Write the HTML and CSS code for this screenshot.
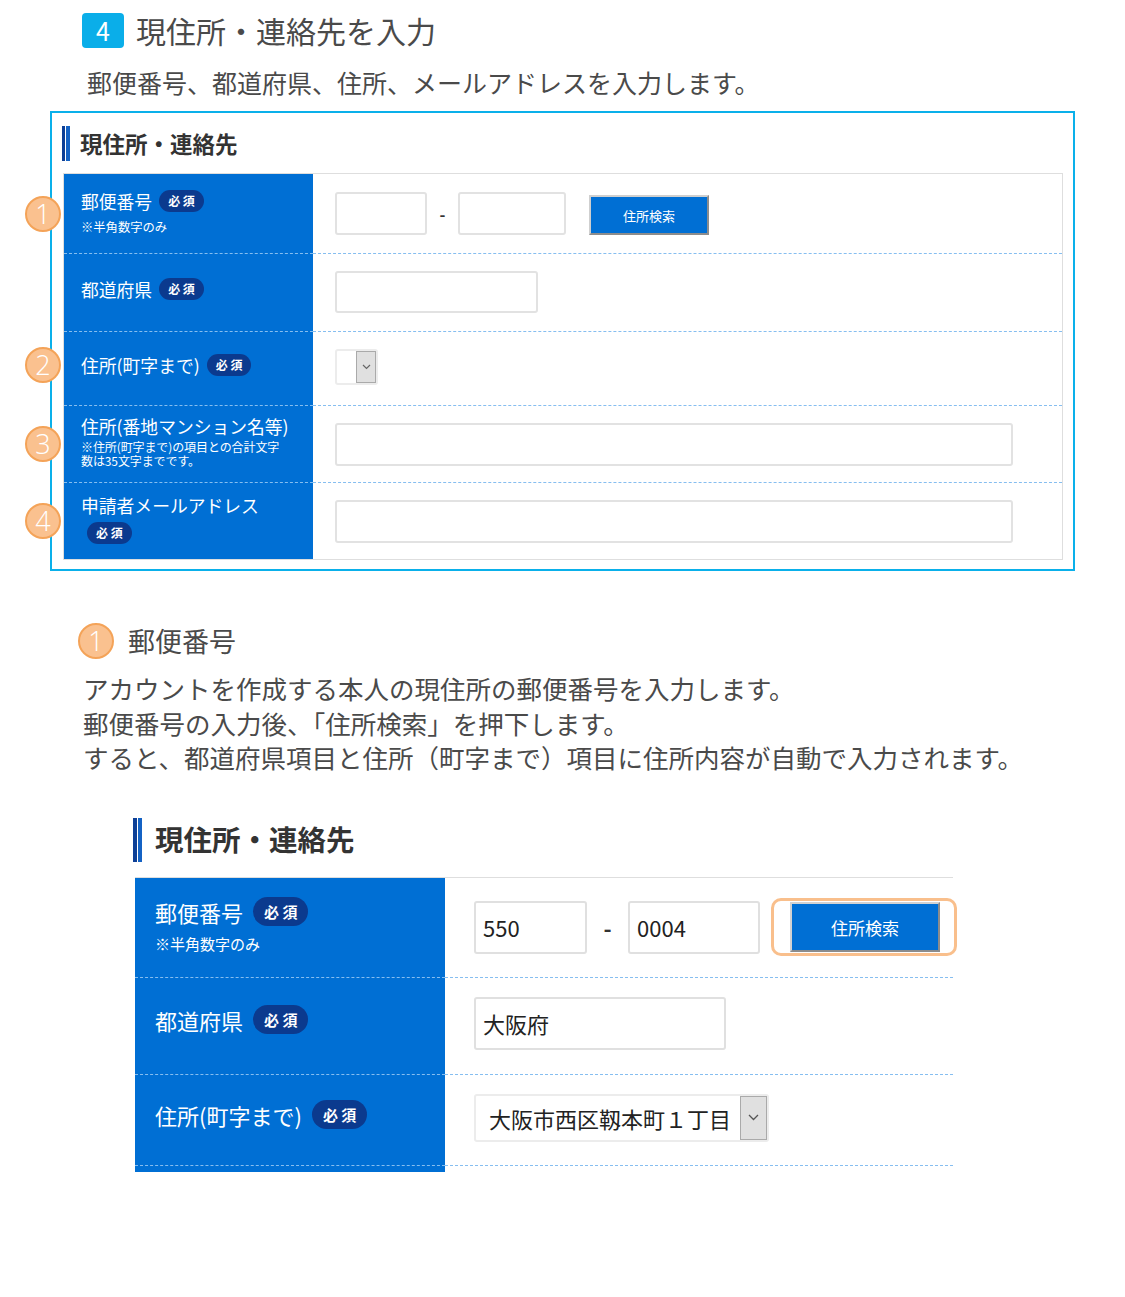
FILE: index.html
```html
<!DOCTYPE html>
<html lang="ja">
<head>
<meta charset="utf-8">
<title>現住所・連絡先を入力</title>
<link rel="stylesheet" href="styles.css">
</head>
<body>
<div class="page">
  <div class="step-head">
    <span class="step-num">4</span>
    <h1 class="step-title">現住所・連絡先を入力</h1>
  </div>
  <p class="step-desc">郵便番号、都道府県、住所、メールアドレスを入力します。</p>

  <div class="box">
    <h2 class="sec-head"><span class="bars"></span>現住所・連絡先</h2>
    <div class="form">
      <div class="row r1">
        <span class="marker">1</span>
        <div class="label">
          <div class="label-line">郵便番号<span class="req">必 須</span></div>
          <div class="note">※半角数字のみ</div>
        </div>
        <div class="value">
          <span class="input zip1"></span>
          <span class="dash">-</span>
          <span class="input zip2"></span>
          <span class="btn">住所検索</span>
        </div>
      </div>
      <div class="row r2">
        <div class="label">
          <div class="label-line">都道府県<span class="req">必 須</span></div>
        </div>
        <div class="value">
          <span class="input pref"></span>
        </div>
      </div>
      <div class="row r3">
        <span class="marker">2</span>
        <div class="label">
          <div class="label-line">住所(町字まで)<span class="req">必 須</span></div>
        </div>
        <div class="value">
          <span class="select small-select">
            <span class="select-val"></span>
            <span class="select-arrow"><svg width="9" height="6" viewBox="0 0 9 6"><path d="M1 1l3.5 3.5L8 1" fill="none" stroke="#666" stroke-width="1.2"/></svg></span>
          </span>
        </div>
      </div>
      <div class="row r4">
        <span class="marker">3</span>
        <div class="label">
          <div class="label-line">住所(番地マンション名等)</div>
          <div class="note">※住所(町字まで)の項目との合計文字</div>
          <div class="note note-2">数は35文字までです。</div>
        </div>
        <div class="value">
          <span class="input wide"></span>
        </div>
      </div>
      <div class="row r5">
        <span class="marker">4</span>
        <div class="label">
          <div class="label-line">申請者メールアドレス</div>
          <div class="req-line"><span class="req">必 須</span></div>
        </div>
        <div class="value">
          <span class="input wide"></span>
        </div>
      </div>
    </div>
  </div>

  <div class="detail-head">
    <span class="marker static">1</span>
    <h3 class="detail-title">郵便番号</h3>
  </div>
  <p class="detail-text">アカウントを作成する本人の現住所の郵便番号を入力します。<br>郵便番号の入力後、「住所検索」を押下します。<br>すると、都道府県項目と住所（町字まで）項目に住所内容が自動で入力されます。</p>

  <h2 class="sec-head big"><span class="bars big-bars"></span>現住所・連絡先</h2>
  <div class="form2">
    <div class="row2 q1">
      <div class="label2">
        <div class="label-line">郵便番号<span class="req big-req">必 須</span></div>
        <div class="note2">※半角数字のみ</div>
      </div>
      <div class="value2">
        <span class="input2 z1">550</span>
        <span class="dash2">-</span>
        <span class="input2 z2">0004</span>
        <span class="ring"><span class="btn2">住所検索</span></span>
      </div>
    </div>
    <div class="row2 q2">
      <div class="label2">
        <div class="label-line">都道府県<span class="req big-req">必 須</span></div>
      </div>
      <div class="value2">
        <span class="input2 p2">大阪府</span>
      </div>
    </div>
    <div class="row2 q3">
      <div class="label2">
        <div class="label-line">住所(町字まで)<span class="req big-req">必 須</span></div>
      </div>
      <div class="value2">
        <span class="select2">
          <span class="select2-val">大阪市西区靱本町１丁目</span>
          <span class="select2-arrow"><svg width="11" height="7" viewBox="0 0 11 7"><path d="M1 1l4.5 4.5L10 1" fill="none" stroke="#555" stroke-width="1.3"/></svg></span>
        </span>
      </div>
    </div>
    <div class="row2 q4">
      <div class="label2"></div>
      <div class="value2"></div>
    </div>
  </div>
</div>
</body>
</html>
```

FILE: styles.css
```css
* { box-sizing: border-box; }
html, body { margin: 0; padding: 0; background: #fff; }
body {
  font-family: "Noto Sans CJK JP", "Noto Sans", sans-serif;
  color: #4a4a4a;
}
.page { padding-top: 13px; height: 1297px; }

/* step heading */
.step-head { display: flex; align-items: center; margin-left: 82px; height: 35px; }
.step-num {
  width: 42px; height: 35px; border-radius: 4px;
  background: #0aaee9; color: #fff;
  font-size: 25px; line-height: 35px; text-align: center;
}
.step-title { margin: 0 0 0 12px; font-size: 30px; font-weight: 400; line-height: 35px; color: #4a4a4a; }
.step-desc { margin: 17px 0 0 87px; font-size: 25px; line-height: 34px; }

/* outer box */
.box {
  margin: 12px 0 0 50px; width: 1025px;
  border: 2px solid #0ab0ea;
  padding: 13px 10px 9px 10px;
}
.sec-head {
  display: flex; align-items: center; height: 35px; margin: 0;
  font-size: 22.5px; font-weight: 700; color: #333; line-height: 1;
}
.bars {
  width: 8px; height: 35px; margin-right: 10px;
  border-left: 3px solid #0d3f96; border-right: 4px solid #1462c4;
}

.form { margin: 12px 0 0 1px; border: 1px solid #dedede; }
.row { position: relative; display: grid; grid-template-columns: 249px 1fr; }
.r1 { height: 79px; }
.r2 { height: 78px; }
.r3 { height: 74px; }
.r4 { height: 77px; }
.r5 { height: 77px; }
.row + .row > .label,
.row + .row > .value { border-top: 1px dashed #86bef0; }

.label {
  background: #006fd4; color: #fff;
  padding-left: 17px;
  display: flex; flex-direction: column; justify-content: flex-start;
}
.r1 .label { padding-top: 16px; }
.r2 .label { padding-top: 24px; }
.r3 .label { padding-top: 22px; }
.r4 .label { padding-top: 9px; }
.r5 .label { padding-top: 11px; }
.label-line { display: flex; align-items: center; font-size: 17.8px; line-height: 22px; white-space: nowrap; }
.req {
  display: inline-flex; align-items: center; justify-content: center;
  height: 22px; padding: 0 9px; margin-left: 7px; border-radius: 11px;
  background: #0b3a8e; color: #fff; font-size: 12px; font-weight: 700; line-height: 1;
  white-space: pre;
}
.req-line { margin-top: 3px; }
.req-line .req { margin-left: 6px; }
.note { font-size: 12.3px; line-height: 14px; margin-top: 8px; white-space: nowrap; }
.r4 .note { margin-top: 3px; font-size: 12px; line-height: 14px; letter-spacing: -0.1px; }
.r4 .note.note-2 { margin-top: 0; }

.value { display: flex; align-items: center; padding-left: 22px; }
.input {
  display: block; height: 43px;
  border: 2px solid #e2e2e2; border-radius: 3px; background: #fff;
}
.zip1 { width: 92px; }
.zip2 { width: 108px; }
.pref { width: 203px; height: 42px; margin-top: -2px; }
.wide { width: 678px; height: 43px; }
.dash { width: 31px; text-align: center; font-size: 16px; color: #333; font-weight: 700; }
.btn {
  display: flex; align-items: center; justify-content: center;
  width: 120px; height: 40px; margin-left: 23px; margin-top: 3px;
  background: #006fd4; color: #fff; font-size: 13px;
  border: 2px solid; border-color: #cfcfcf #8c8c8c #8c8c8c #cfcfcf;
}

.select {
  display: flex; width: 43px; height: 36px; margin-top: -4px;
  border: 2px solid #ececec; border-radius: 3px; background: #fff;
}
.select-val { flex: 1; }
.select-arrow {
  width: 20px; background: #e0e0e0; border: 1px solid #aaa;
  display: flex; align-items: center; justify-content: center;
}

/* orange markers */
.marker {
  position: absolute; left: -39px; top: 50%; margin-top: -18px;
  width: 36px; height: 36px; border-radius: 50%;
  background: #fac18f; border: 2px solid #f4a358; color: #fff;
  font-size: 27px; line-height: 31px; text-align: center; font-weight: 300;
  font-family: "Open Sans", "Noto Sans", sans-serif;
}
.r3 .marker { margin-top: -21px; }
.marker.static { position: static; margin: 0; display: block; }

/* detail */
.detail-head { display: flex; align-items: center; margin: 52px 0 0 78px; }
.detail-title { margin: 0 0 0 14px; font-size: 27px; font-weight: 400; line-height: 36px; color: #4a4a4a; }
.detail-text { margin: 12px 0 0 83px; font-size: 25.5px; line-height: 34.5px; }

.sec-head.big { height: 44px; margin: 43px 0 0 133px; font-size: 28.5px; }
.big-bars { width: 9px; height: 44px; margin-right: 13px; border-left-width: 4px; border-right-width: 4px; }

.form2 { margin: 15px 0 0 135px; width: 818px; border-top: 1px solid #dedede; }
.row2 { display: grid; grid-template-columns: 310px 1fr; }
.q1 { height: 99px; }
.q2 { height: 97px; }
.q3 { height: 91px; }
.q4 { height: 7px; }
.row2 + .row2 > .label2,
.row2 + .row2 > .value2 { border-top: 1px dashed #86bef0; }
.label2 {
  background: #006fd4; color: #fff; padding-left: 20px;
  display: flex; flex-direction: column; justify-content: flex-start;
}
.q1 .label2 { padding-top: 19px; }
.q2 .label2 { padding-top: 27px; }
.q3 .label2 { padding-top: 25px; }
.label2 .label-line { font-size: 22px; line-height: 30px; }
.big-req { height: 29px; padding: 0 11px; margin-left: 10px; border-radius: 15px; font-size: 15px; }
.note2 { font-size: 15px; line-height: 18px; margin-top: 8px; }

.value2 { display: flex; align-items: center; padding-left: 29px; }
.q2 .value2, .q3 .value2 { align-items: flex-start; padding-top: 19px; }
.input2 {
  display: flex; align-items: center; height: 53px; padding-left: 7px;
  border: 2px solid #e0e0e0; border-radius: 3px; background: #fff;
  font-size: 22px; color: #222;
}
.z1 { width: 113px; }
.z2 { width: 132px; }
.p2 { width: 252px; }
.dash2 { width: 41px; text-align: center; font-size: 22px; font-weight: 700; color: #333; }
.ring {
  display: flex; margin-left: 11px;
  border: 3px solid #f9bf8c; border-radius: 10px;
  padding: 1px 14px 1px 16px;
}
.btn2 {
  display: flex; align-items: center; justify-content: center;
  width: 150px; height: 50px;
  background: #006fd4; color: #fff; font-size: 17px;
  border: 2px solid; border-color: #d2d2d2 #8c8c8c #8c8c8c #d2d2d2;
}
.select2 {
  display: flex; width: 295px; height: 48px;
  border: 2px solid #ececec; border-radius: 3px; background: #fff;
}
.select2-val { flex: 1; display: flex; align-items: center; padding-left: 13px; font-size: 22px; color: #222; }
.select2-arrow {
  width: 27px; background: #e0e0e0; border: 1px solid #aaa;
  display: flex; align-items: center; justify-content: center;
}
```
